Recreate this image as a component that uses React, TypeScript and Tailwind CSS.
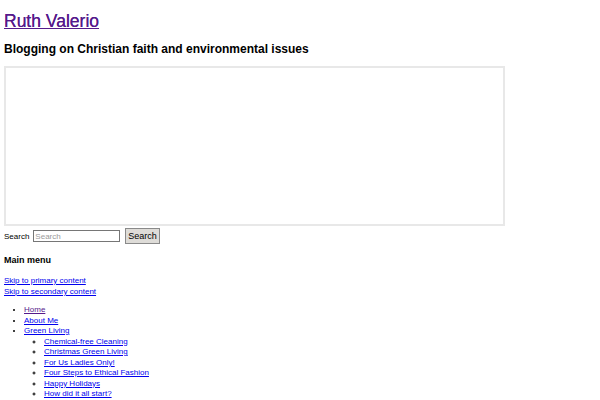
export default function App() {
  const sub = [
    "Chemical-free Cleaning",
    "Christmas Green Living",
    "For Us Ladies Only!",
    "Four Steps to Ethical Fashion",
    "Happy Holidays",
    "How did it all start?",
  ];
  return (
    <div className="w-[600px] h-[400px] overflow-hidden bg-white px-1 font-['Liberation_Sans',Arial,sans-serif] text-black">
      <h1 className="pt-[10px] text-[17.5px] leading-[22px]">
        <a href="#" className="text-[#551a8b] underline [text-shadow:0_0_0.5px_#551a8b]">Ruth Valerio</a>
      </h1>
      <h2 className="mt-[10px] text-[12px] leading-[15px] font-bold">Blogging on Christian faith and environmental issues</h2>
      <div className="mt-[9px] w-[501px] h-[160px] border-2 border-[#e8e8e8]" />
      <div className="mt-[2px] flex items-center gap-[4px] text-[8px] leading-[10px]">
        <span className="pt-[1px]">Search</span>
        <input placeholder="Search" className="w-[87px] h-[12px] border border-[#767676] px-[1px] text-[8px] placeholder:text-[#9a9a9a]" />
        <button className="ml-[1px] h-[16px] px-[2px] bg-[#dedcd8] border border-[#8a8a8a] text-[9px] leading-[12px]">Search</button>
      </div>
      <h3 className="mt-[11px] text-[9px] leading-[11px] font-bold">Main menu</h3>
      <div className="mt-[9px] flex flex-col text-[8px] leading-[11px]">
        <a href="#" className="text-[#0000ee] underline">Skip to primary content</a>
        <a href="#" className="text-[#0000ee] underline">Skip to secondary content</a>
      </div>
      <ul className="mt-[8px] pl-[20px] list-disc text-[8px] leading-[10.5px]">
        <li><a href="#" className="text-[#551a8b] underline">Home</a></li>
        <li><a href="#" className="text-[#0000ee] underline">About Me</a></li>
        <li>
          <a href="#" className="text-[#0000ee] underline">Green Living</a>
          <ul className="pl-[20px] list-[circle]">
            {sub.map(s => <li key={s}><a href="#" className="text-[#0000ee] underline">{s}</a></li>)}
          </ul>
        </li>
      </ul>
    </div>
  );
}
